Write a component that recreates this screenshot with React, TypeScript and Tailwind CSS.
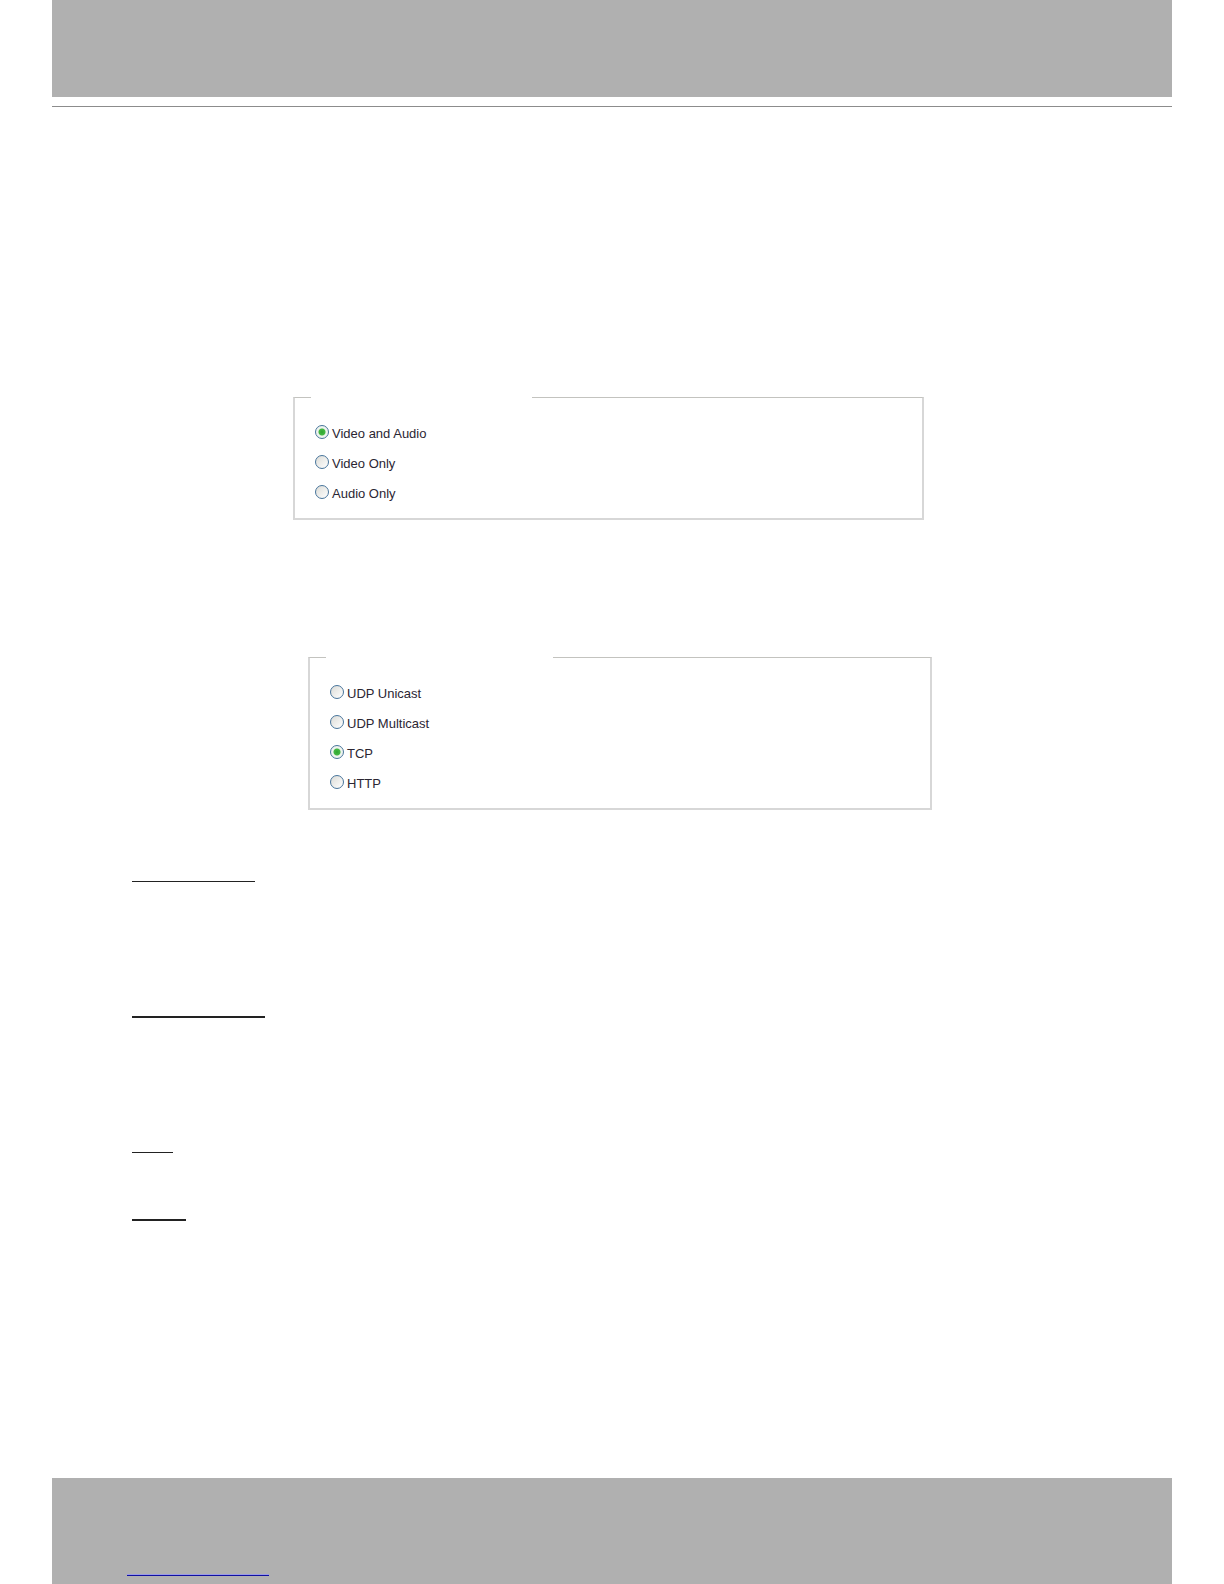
import { useState } from 'react'
import { clsx } from 'clsx'

const MEDIA_OPTIONS = ['Video and Audio', 'Video Only', 'Audio Only']
const PROTOCOL_OPTIONS = ['UDP Unicast', 'UDP Multicast', 'TCP', 'HTTP']

interface RadioGroupProps {
  name: string
  options: string[]
  initial: string
  className: string
  legendClassName: string
}

/** Bordered group of radio buttons; the blank legend leaves a gap in the top border. */
function RadioGroup({ name, options, initial, className, legendClassName }: RadioGroupProps) {
  const [value, setValue] = useState(initial)

  return (
    <fieldset
      className={clsx(
        'border-2 border-t border-[#d7d7d7] border-t-[#c3c3bf] pt-[19px] pr-4 pb-[11px] pl-5',
        className,
      )}
    >
      <legend className={clsx('h-px', legendClassName)} />
      {options.map((option) => (
        <label key={option} className="flex h-[30px] items-center gap-[3px]">
          <input
            type="radio"
            name={name}
            value={option}
            checked={value === option}
            onChange={() => setValue(option)}
            className="size-[14px] shrink-0 appearance-none rounded-full border border-[#47749b] bg-linear-to-br from-[#dcdcd7] to-white checked:bg-[radial-gradient(circle,#2fa52f_0,#43b843_3px,#eef3ee_4px)]"
          />
          <span className="pt-[3px] text-[13px] leading-4">{option}</span>
        </label>
      ))}
    </fieldset>
  )
}

export default function App() {
  return (
    <div className="flex min-h-screen flex-col bg-white px-[52px] font-['Liberation_Sans',Arial,sans-serif] text-[#2b2633]">
      <header className="border-b border-[#8c8c8c] pb-[9px]">
        <div className="h-[97px] bg-[#b0b0b0]" />
      </header>

      <main className="flex-1 px-20 pt-[290px] pb-[255px]">
        <RadioGroup
          name="media"
          options={MEDIA_OPTIONS}
          initial="Video and Audio"
          className="ml-[161px] max-w-[631px]"
          legendClassName="-ml-1 w-[221px]"
        />
        <RadioGroup
          name="protocol"
          options={PROTOCOL_OPTIONS}
          initial="TCP"
          className="mt-[137px] ml-[176px] max-w-[624px]"
          legendClassName="-ml-1 w-[227px]"
        />

        <hr className="mt-[71px] w-[123px] border-t border-[#222222]" />
        <hr className="mt-[134px] w-[133px] border-t-2 border-[#222222]" />
        <hr className="mt-[134px] w-[41px] border-t border-[#222222]" />
        <hr className="mt-[66px] w-[54px] border-t-2 border-[#222222]" />
      </main>

      <footer className="bg-[#b0b0b0] px-[75px] pt-20 pb-2">
        <a
          href="#"
          className="block h-[18px] w-[142px] border-b border-[#1010a0] bg-linear-to-t from-[#9a9ae6] from-[1px] to-transparent to-[1px]"
        />
      </footer>
    </div>
  )
}
